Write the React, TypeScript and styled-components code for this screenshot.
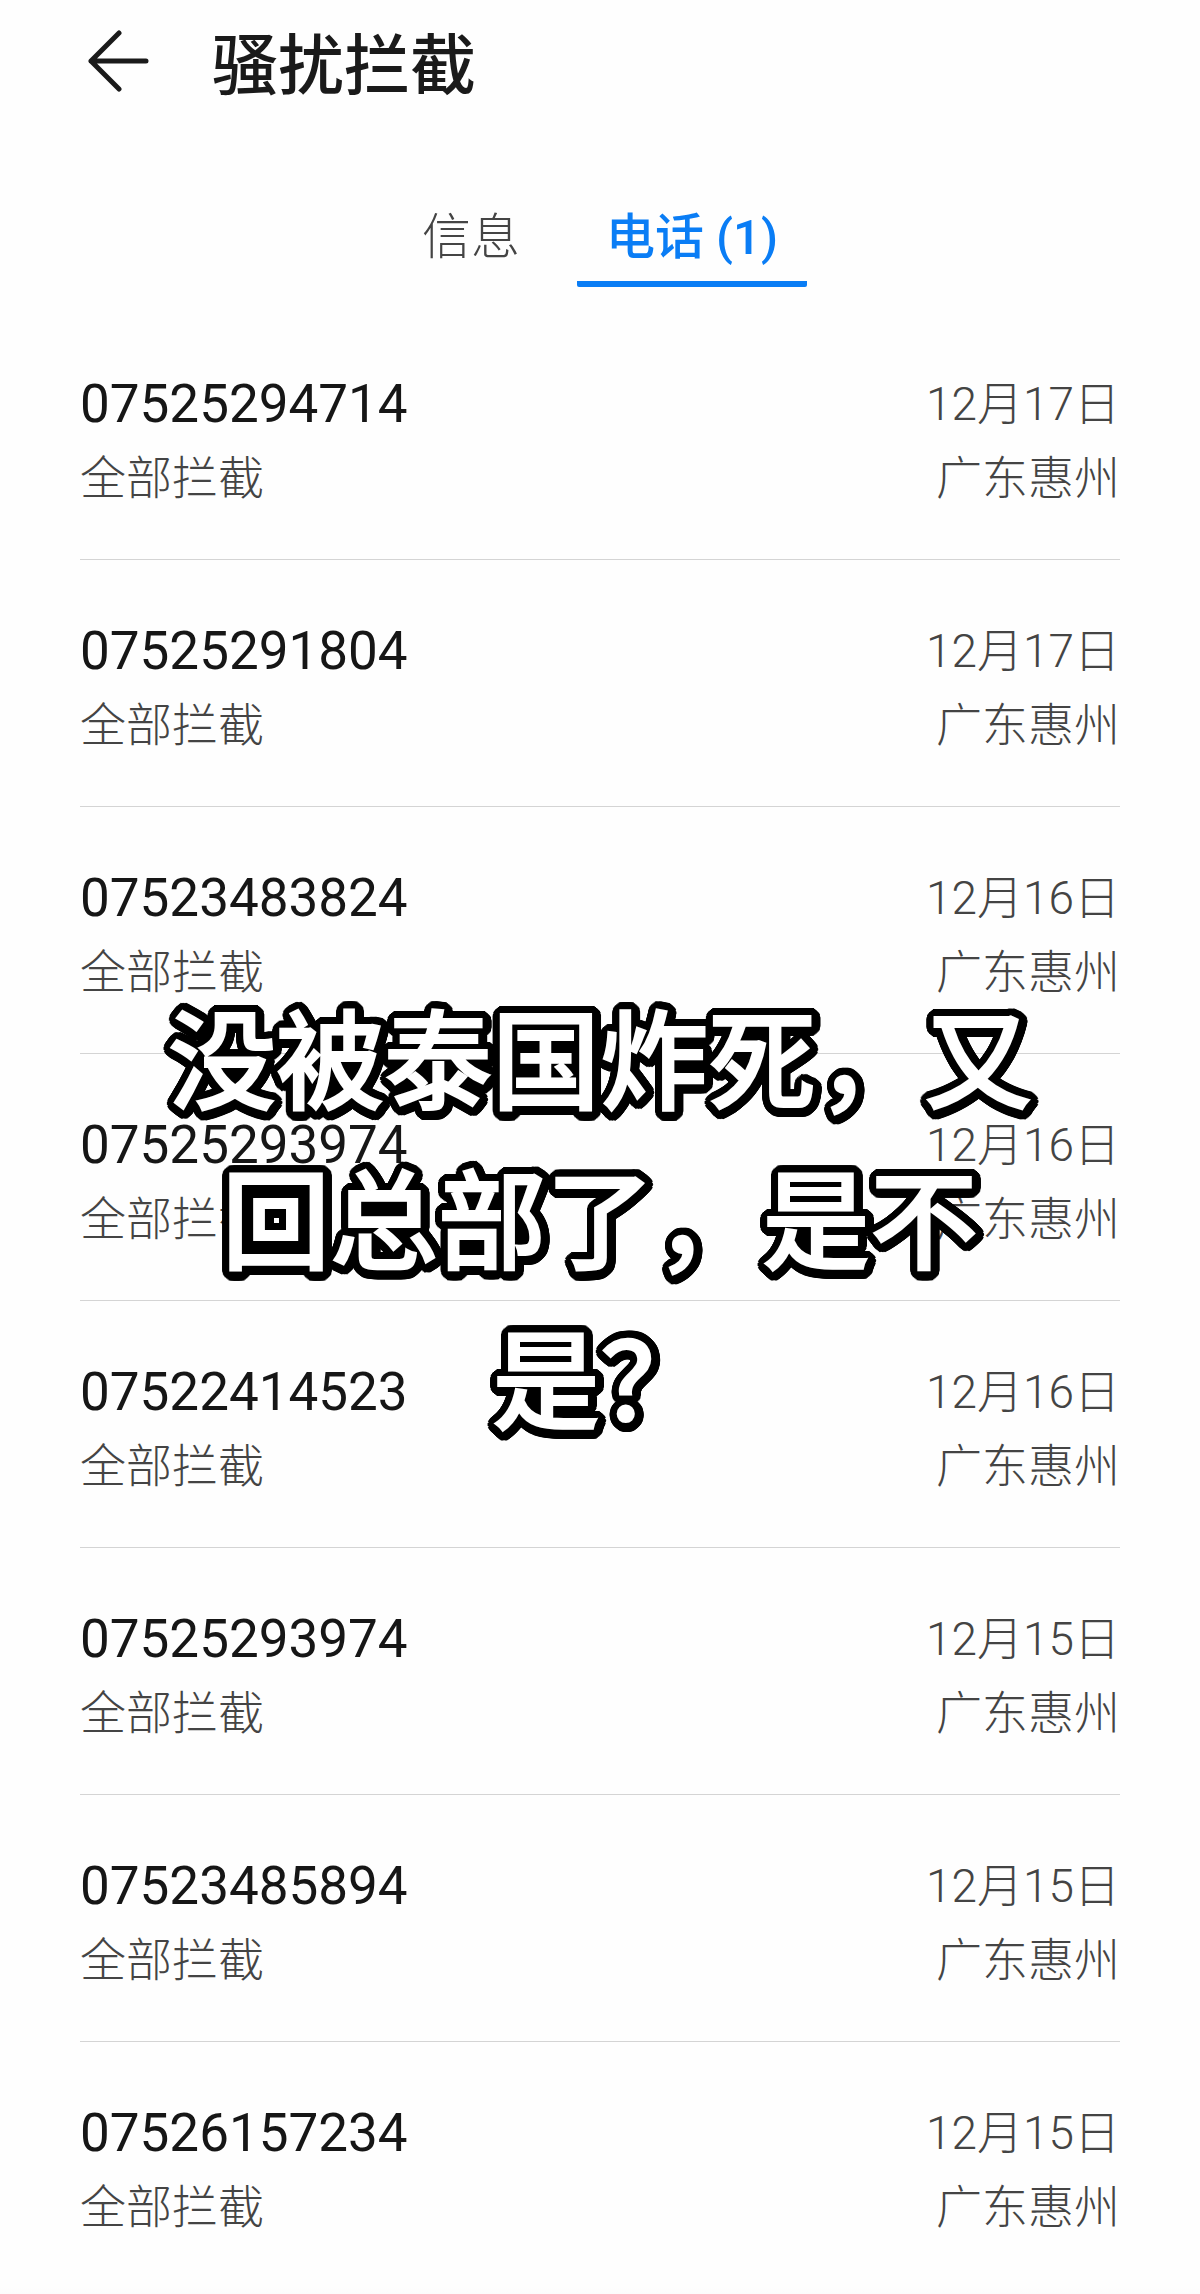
import React from "react";
import styled, { createGlobalStyle } from "styled-components";

const GlobalStyle = createGlobalStyle`
  * { box-sizing: border-box; }
  body {
    margin: 0;
    background: #fefefe;
    color: #1a1a1a;
    font-family: Roboto, "Noto Sans CJK SC", sans-serif;
  }
`;

const Screen = styled.main`
  position: relative;
  padding-bottom: 12px;
  background: linear-gradient(to top, #fafafa, #fefefe 14px);
`;

const Header = styled.header`
  display: flex;
  align-items: center;
  gap: 62px;
  height: 128px;
  padding: 0 80px 0 88px;
`;

const BackButton = styled.button`
  display: flex;
  padding: 0 0 6px;
  border: 0;
  background: none;
  color: inherit;
  cursor: pointer;
`;

const Title = styled.h1`
  margin: 0;
  padding-top: 6px;
  font-size: 66px;
  line-height: 96px;
  font-weight: 500;
`;

const Tabs = styled.nav`
  display: flex;
  justify-content: center;
  height: 160px;
  padding-top: 72px;
  gap: 28px;
`;

const Tab = styled.button<{ $active?: boolean }>`
  height: 87px;
  padding: 0 29px 6px;
  border: 0;
  border-bottom: 6px solid ${(p) => (p.$active ? "#0a7df5" : "transparent")};
  border-radius: 2px;
  background: none;
  color: ${(p) => (p.$active ? "#0a7df5" : "#444")};
  font: inherit;
  font-size: 49px;
  font-weight: ${(p) => (p.$active ? 500 : 300)};
  line-height: 68px;
  cursor: pointer;
`;

const CallList = styled.ul`
  margin: 0;
  padding: 25px 80px 0;
  list-style: none;
`;

const CallRow = styled.li`
  display: grid;
  grid-template-columns: 1fr auto;
  grid-template-rows: 74px 74px;
  align-items: center;
  height: 247px;
  padding-top: 54px;
  border-bottom: 1px solid #d4d4d4;

  &:last-child {
    border-bottom-color: transparent;
  }
`;

const PhoneNumber = styled.span`
  font-size: 53px;
  line-height: 74px;
  color: #161616;
`;

const Detail = styled.span<{ $end?: boolean }>`
  font-size: 46px;
  line-height: 74px;
  font-weight: 300;
  color: #444;
  text-align: ${(p) => (p.$end ? "right" : "left")};
`;

// A ring of hard shadows gives the caption a round-cornered outline,
// slightly heavier towards the bottom right.
const outline = Array.from({ length: 40 }, (_, i) => {
  const angle = (i / 40) * Math.PI * 2;
  const x = Math.cos(angle) * 9 + 1;
  const y = Math.sin(angle) * 9 + 1;
  return `${x.toFixed(2)}px ${y.toFixed(2)}px 0 #000`;
}).join(", ");

const Caption = styled.p`
  position: absolute;
  top: 974px;
  left: 50%;
  width: 900px;
  max-width: 100%;
  margin: 0;
  transform: translateX(-50%);
  color: #fff;
  font-family: "Noto Sans CJK SC", sans-serif;
  font-size: 108px;
  font-weight: 500;
  line-height: 160px;
  text-align: center;
  -webkit-text-stroke: 2px #fff;
  text-shadow: ${outline};
  pointer-events: none;
`;

const calls = [
  ["07525294714", "12月17日"],
  ["07525291804", "12月17日"],
  ["07523483824", "12月16日"],
  ["07525293974", "12月16日"],
  ["07522414523", "12月16日"],
  ["07525293974", "12月15日"],
  ["07523485894", "12月15日"],
  ["07526157234", "12月15日"],
];

export default function App() {
  return (
    <>
      <GlobalStyle />
      <Screen>
        <Header>
          <BackButton aria-label="返回">
            <svg width="62" height="62" viewBox="0 0 62 62" fill="none" stroke="currentColor" strokeWidth="5" strokeLinecap="round" strokeLinejoin="round">
              <path d="M31 3 3 31l28 28M3 31h55" />
            </svg>
          </BackButton>
          <Title>骚扰拦截</Title>
        </Header>
        <Tabs>
          <Tab>信息</Tab>
          <Tab $active aria-current="page">电话 (1)</Tab>
        </Tabs>
        <CallList>
          {calls.map(([number, date], i) => (
            <CallRow key={i}>
              <PhoneNumber>{number}</PhoneNumber>
              <Detail $end>{date}</Detail>
              <Detail>全部拦截</Detail>
              <Detail $end>广东惠州</Detail>
            </CallRow>
          ))}
        </CallList>
        <Caption>没被泰国炸死，又回总部了，是不是？</Caption>
      </Screen>
    </>
  );
}
